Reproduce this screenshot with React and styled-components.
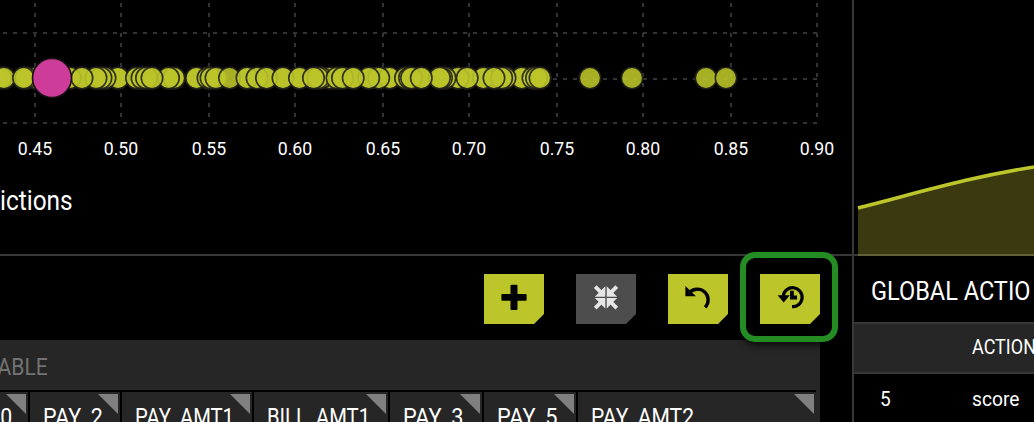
import React from "react";
import styled, { createGlobalStyle } from "styled-components";

const LIME = "#bcc62a";
const LINE = "#383838";
const PANEL = "#262626";

const GlobalStyle = createGlobalStyle`
  * { box-sizing: border-box; }
  body { margin: 0; background: #000; color: #fff; overflow: hidden; font-family: Roboto, "Liberation Sans", sans-serif; }
`;

const Page = styled.div`
  display: grid;
  grid-template-columns: 852px 182px;
  width: 1034px;
  height: 422px;
  overflow: hidden;
  background: #000;
`;

const Main = styled.main`
  display: flex;
  flex-direction: column;
  min-width: 0;
  overflow: hidden;
`;

const ChartPanel = styled.section`
  height: 256px;
  flex: none;
  border-bottom: 2px solid ${LINE};
`;

const Plot = styled.svg`
  display: block;
  width: 852px;
  height: 180px;
`;

const Label = styled.span`
  display: inline-block;
  flex: none;
  white-space: nowrap;
  font-size: ${(p) => p.$size}px;
  line-height: ${(p) => p.$line || 30}px;
  transform: scaleX(${(p) => p.$stretch || 1});
  transform-origin: ${(p) => p.$origin || "left"} center;
`;

const Toolbar = styled.div`
  display: flex;
  flex: none;
  justify-content: flex-end;
  gap: 32px;
  height: 84px;
  padding: 18px 32px 0 0;
`;

const Slot = styled.div`
  position: relative;
  width: 60px;
  height: 50px;
`;

const Action = styled.button`
  display: block;
  width: 60px;
  height: 50px;
  padding: 0;
  border: 0;
  background: ${(p) => (p.$muted ? "#4d4d4d" : LIME)};
  color: ${(p) => (p.$muted ? "#e6e6e6" : "#000")};
  clip-path: polygon(0 0, 100% 0, 100% 40px, 50px 100%, 0 100%);
  svg { display: block; }
`;

const Highlight = styled.div`
  position: absolute;
  z-index: 2;
  inset: -22px -18px -18px -20px;
  border: 6px solid #238c23;
  border-radius: 15px;
  box-shadow: 1px 4px 6px rgba(0, 0, 0, 0.6);
  pointer-events: none;
`;

const Table = styled.section`
  width: 820px;
  flex: 1;
  background: ${PANEL};
`;

const TableTitle = styled.div`
  display: flex;
  justify-content: flex-end;
  width: 47.5px;
  height: 50px;
  padding-top: 12px;
  color: #737373;
`;

const HeaderRow = styled.div`
  display: flex;
  gap: 2px;
  width: 816px;
  height: 40px;
  padding-top: 2px;
  background: #000;
`;

const HeaderCell = styled.div`
  position: relative;
  display: flex;
  justify-content: ${(p) => (p.$end ? "flex-end" : "flex-start")};
  width: ${(p) => p.$width}px;
  height: 46px;
  padding: 9.5px ${(p) => (p.$end ? 15.5 : 0)}px 0 ${(p) => (p.$end ? 0 : 13)}px;
  background: ${PANEL};

  &::after {
    content: "";
    position: absolute;
    top: 2px;
    right: 2px;
    width: 20px;
    height: 20px;
    background: #808080;
    clip-path: polygon(0 0, 100% 0, 100% 100%);
  }
`;

const Side = styled.aside`
  border-left: 2px solid ${LINE};
  overflow: hidden;
`;

const AreaChart = styled.svg`
  display: block;
  width: 180px;
  height: 256px;
`;

const SideTitle = styled.div`
  height: 66px;
  padding: 20px 0 0 17px;
`;

const SideRow = styled.div`
  display: grid;
  grid-template-columns: 92px 1fr;
  height: ${(p) => (p.$head ? 52 : 50)}px;
  padding: ${(p) => (p.$head ? 8 : 10)}px 0 0 26px;
  background: ${(p) => (p.$head ? PANEL : "#000")};
  border: solid ${LINE};
  border-width: ${(p) => (p.$head ? "2px 0" : "0")};
`;

const ticks = [
  [35, "0.45"], [121, "0.50"], [209, "0.55"], [295, "0.60"], [383, "0.65"],
  [469, "0.70"], [557, "0.75"], [643, "0.80"], [731, "0.85"], [817, "0.90"],
];

/* Observations in paint order: later points cover earlier ones. */
const cluster = [
  -3, 1, 4, 36, 26, 23.5, 70,
  118, 105, 101, 96, 82, 136.5, 142, 146.5,
  174, 168.5, 152, 196.5, 208, 211, 216, 229.5,
  247, 257, 266.5, 283, 299.5, 330, 321, 318, 313.5,
  337, 342.5, 389.5, 378.7, 368.7, 353.2,
  405.5, 409.5, 411.5, 458, 445, 441.5, 439.5, 421.3,
  483.5, 467.2, 521.7, 505, 501.7, 494, 533, 536.5, 540,
];
const outliers = [590, 632, 706, 726];
/* Repeated scores sit under the visible cluster and deepen its colour. */
const points = [...cluster.filter((x) => x !== 229.5), ...cluster, ...outliers];

const cells = [
  { text: "PAY_0", width: 28, stretch: 0.91, end: true },
  { text: "PAY_2", width: 90, stretch: 0.92 },
  { text: "PAY_AMT1", width: 130, stretch: 0.865 },
  { text: "BILL_AMT1", width: 134, stretch: 0.865 },
  { text: "PAY_3", width: 92, stretch: 0.93 },
  { text: "PAY_5", width: 92, stretch: 0.93 },
  { text: "PAY_AMT2", width: 238, stretch: 0.9 },
];

function PredictionPlot() {
  return (
    <Plot viewBox="0 0 852 180">
      <g stroke="#333" strokeWidth="2" strokeDasharray="4 6">
        {[33, 79, 123].map((y) => <path key={y} d={`M-7 ${y}H817`} />)}
        {ticks.map(([x]) => <path key={x} d={`M${x} -7V122`} />)}
      </g>
      <g fill={LIME} stroke="#23211a" strokeWidth="1.6">
        {points.map((x, i) => <circle key={i} cx={x} cy="78" r="10.7" opacity="0.89" />)}
      </g>
      <circle cx="52" cy="78" r="19.5" fill="#ce3c9a" stroke="#171217" strokeWidth="1.6" />
      <g fill="#fff" fontSize="18" textAnchor="middle">
        {ticks.map(([x, t]) => (
          <text key={t} x={x} y="155" textLength="34.5" lengthAdjust="spacingAndGlyphs">{t}</text>
        ))}
      </g>
    </Plot>
  );
}

const Icon = ({ children }) => <svg width="60" height="50" viewBox="0 0 60 50">{children}</svg>;

const PlusIcon = () => (
  <Icon>
    <g fill="currentColor">
      <rect x="26.5" y="10.8" width="7" height="25.2" rx="1" />
      <rect x="17.4" y="20" width="25.2" height="6.8" rx="1" />
    </g>
  </Icon>
);

const CollapseIcon = () => (
  <Icon>
    <g transform="translate(30 23.4)" fill="currentColor" stroke="currentColor">
      {[0, 90, 180, 270].map((a) => (
        <g key={a} transform={`rotate(${a})`}>
          <path d="M-.7-.7V-11.2L-11.2-.7Z" stroke="none" />
          <path d="M-10.8-10.8L-4-4" strokeWidth="3.8" />
        </g>
      ))}
    </g>
  </Icon>
);

const UndoIcon = () => (
  <Icon>
    <path d="M17.4 12V22.2H27.9Z" fill="currentColor" />
    <path d="M21.4 18.6A10.8 10.8 0 0 1 37.2 33.4" fill="none" stroke="currentColor" strokeWidth="3.4" />
  </Icon>
);

const HistoryIcon = () => (
  <Icon>
    <path d="M17.6 21.2H29.8L23.7 28.6Z" fill="currentColor" />
    <path d="M23.2 22A9.5 9.5 0 1 1 32 32.7" fill="none" stroke="currentColor" strokeWidth="3.2" />
    <path d="M30 16.8H33.8V21.4H37V25.4H30Z" fill="currentColor" />
  </Icon>
);

export default function App() {
  return (
    <Page>
      <GlobalStyle />
      <Main>
        <ChartPanel>
          <PredictionPlot />
          <Label $size={27} $line={42} $stretch={0.905}>ictions</Label>
        </ChartPanel>
        <Toolbar>
          <Slot><Action aria-label="Add"><PlusIcon /></Action></Slot>
          <Slot><Action $muted aria-label="Collapse"><CollapseIcon /></Action></Slot>
          <Slot><Action aria-label="Undo"><UndoIcon /></Action></Slot>
          <Slot><Action aria-label="Reset history"><HistoryIcon /></Action><Highlight /></Slot>
        </Toolbar>
        <Table>
          <TableTitle><Label $size={23.4} $stretch={0.9} $origin="right">ABLE</Label></TableTitle>
          <HeaderRow>
            {cells.map((c) => (
              <HeaderCell key={c.text} $width={c.width} $end={c.end}>
                <Label $size={23.4} $stretch={c.stretch} $origin={c.end ? "right" : "left"}>{c.text}</Label>
              </HeaderCell>
            ))}
          </HeaderRow>
        </Table>
      </Main>
      <Side>
        <AreaChart viewBox="0 0 180 256">
          <path d="M4 208C60 194 115 177 180 167V256H4Z" fill="#3a390f" />
          <path d="M4 208C60 194 115 177 180 167" fill="none" stroke={LIME} strokeWidth="3.6" />
          <path d="M0 255H4" stroke={LINE} strokeWidth="2" />
          <path d="M4 255H180" stroke="#60613a" strokeWidth="2" />
        </AreaChart>
        <SideTitle><Label $size={26} $stretch={0.905}>GLOBAL ACTIO</Label></SideTitle>
        <SideRow $head><span /><Label $size={20} $stretch={0.9}>ACTION</Label></SideRow>
        <SideRow><Label $size={20} $stretch={0.95}>5</Label><Label $size={20} $stretch={0.96}>score</Label></SideRow>
      </Side>
    </Page>
  );
}
